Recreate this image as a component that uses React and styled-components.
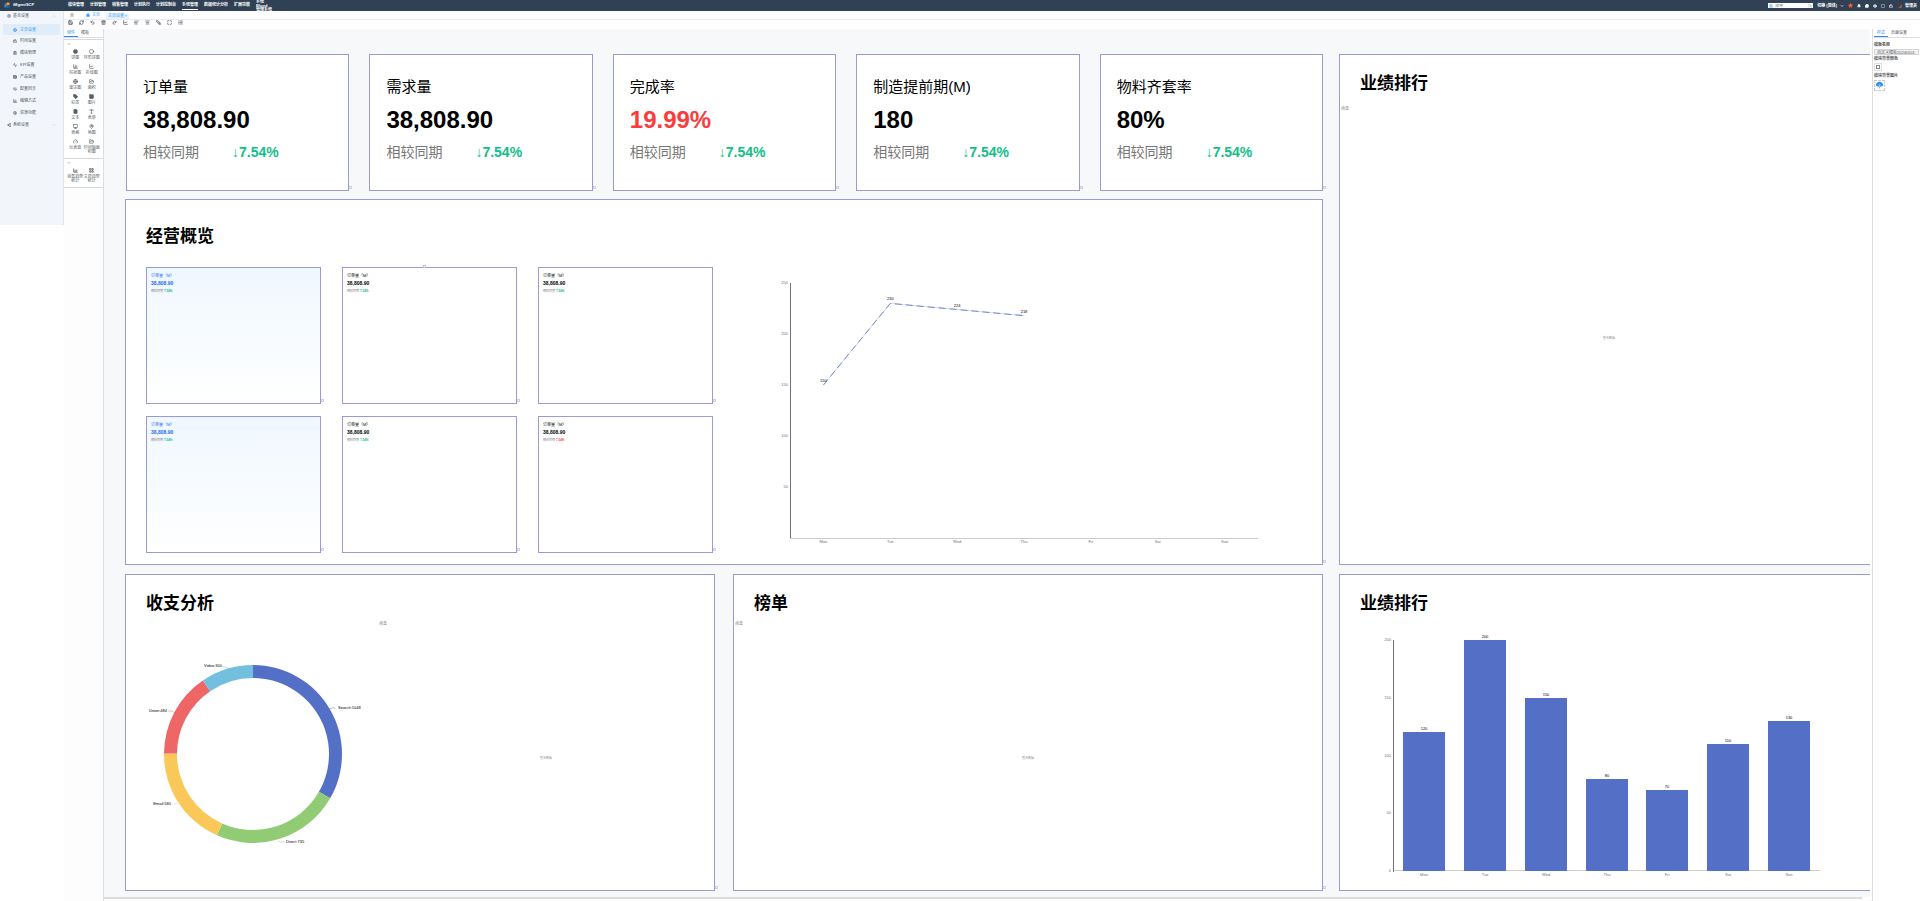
import React from "react";
import styled, { createGlobalStyle } from "styled-components";
import {
  Activity, AlignCenter, AlignLeft, ArrowLeftRight, Bell, ChartArea, ChartColumn, ChartLine, ChartPie,
  ChevronDown, ChevronUp, Circle, ClipboardList, CloudUpload, FileText, FolderOpen, Gauge,
  Globe, Hexagon, House, Image, LayoutGrid, List, Lock, MapPin, Maximize, Menu, MessageCircle, Monitor,
  Redo2, RefreshCw, Save, Search, Settings, Share2, SquareStack, Star, Table, Tag, Trash2, Type, Undo2,
} from "lucide-react";

const LINE = "#9a9ad6";

const GlobalStyle = createGlobalStyle`
  *, *::before, *::after { box-sizing: border-box; }
  body {
    margin: 0;
    background: #fff;
    color: #333;
    font-family: "Liberation Sans", "Noto Sans CJK SC", sans-serif;
    font-size: 4px;
    line-height: 6px;
  }
  button, input { font: inherit; color: inherit; margin: 0; padding: 0; border: 0; background: none; }
  h2, h3, p, ul { margin: 0; padding: 0; font-weight: normal; font-size: inherit; }
  ul { list-style: none; }
  a { color: inherit; text-decoration: none; }
  svg { display: block; flex: none; }
`;

const Page = styled.div`
  display: flex;
  flex-direction: column;
  min-height: 100vh;
  overflow: hidden;
`;

/* header */
const Header = styled.header`
  display: flex;
  height: 11px;
  padding: 0 3px 0 4px;
  background: #304156;
  color: #fff;
`;
const Brand = styled.a`
  display: flex;
  align-items: center;
  gap: 3px;
  width: 64px;
  height: 10px;
  font-size: 4px;
  font-weight: bold;
`;
const Nav = styled.nav`
  display: flex;
  flex: 1;
  gap: 6px;
  font-weight: bold;
  white-space: nowrap;
`;
const NavLink = styled.a`
  height: 10px;
  padding-top: 2px;
  border-bottom: 1px solid ${(p) => (p.$active ? "#fff" : "transparent")};
`;
const NavStack = styled.a`
  line-height: 4px;
`;
const HeaderTools = styled.div`
  display: flex;
  align-items: center;
  gap: 4px;
  height: 11px;
`;
const SearchBox = styled.label`
  display: flex;
  align-items: center;
  gap: 2px;
  width: 45px;
  height: 5px;
  padding: 0 1px;
  background: #fff;
  color: #8a9aac;
  line-height: 4px;

  input { flex: 1; min-width: 0; height: 4px; }
  svg:first-child { color: #409eff; }
`;
const Tool = styled.button`
  display: flex;
  align-items: center;
  gap: 3px;
  color: ${(p) => p.$color || "#fff"};
  font-weight: bold;
  white-space: nowrap;
`;
const Avatar = styled.span`
  width: 5px;
  height: 5px;
  border-radius: 2px;
  background: linear-gradient(135deg, #4b3a36 50%, #c88a68);
`;

/* sidebar */
const Body = styled.div`
  display: flex;
  flex: 1;
  align-items: stretch;
`;
const Sidebar = styled.aside`
  flex: 0 0 64px;
  align-self: flex-start;
  height: 214px;
  padding: 0 3px;
  border-right: 1px solid #dfe5ec;
  background: #f2f6fa;
`;
const Group = styled.button`
  display: flex;
  align-items: center;
  gap: 2px;
  width: 100%;
  height: 10px;
  padding: 0 4px;
  color: #555f6b;

  span { flex: 1; text-align: left; }
`;
const MenuList = styled.ul`
  padding: 3px 0 1px;
`;
const MenuLink = styled.a`
  display: flex;
  align-items: center;
  gap: 3px;
  height: ${(p) => (p.$active ? "11px" : "12px")};
  padding-left: 10px;
  border-radius: 2px;
  background: ${(p) => (p.$active ? "#e0edf9" : "transparent")};
  color: ${(p) => (p.$active ? "#409eff" : "#4a5562")};
`;

/* workspace */
const Work = styled.main`
  display: flex;
  flex: 1;
  flex-direction: column;
  min-width: 0;
`;
const TabsRow = styled.div`
  display: flex;
  align-items: flex-end;
  gap: 4px;
  height: 9px;
  padding-left: 4px;
  border-bottom: 1px solid #e8ebef;
`;
const PageTab = styled.button`
  display: flex;
  align-items: center;
  gap: 2px;
  height: 6px;
  margin-bottom: ${(p) => (p.$active ? 0 : "1px")};
  padding: 0 2px;
  margin-right: ${(p) => (p.$plain ? "4px" : 0)};
  border-radius: 2px 2px 0 0;
  background: ${(p) => (p.$active ? "#e6f2ff" : "transparent")};
  color: ${(p) => (p.$plain ? "#666" : "#409eff")};
`;
const Toolbar = styled.div`
  display: flex;
  gap: 6px;
  height: 9px;
  padding-left: 4px;
  color: #4a4f57;
`;
const ToolbarButton = styled.button`
  height: 5px;
`;
const Editor = styled.div`
  display: flex;
  flex: 1;
`;
const Palette = styled.section`
  flex: 0 0 40px;
  border-right: 1px solid #dcdee2;
  background: #fdfdfd;
`;
const SideTabs = styled.div`
  display: flex;
  height: 9px;
  border-bottom: 1px solid #dcdee2;
`;
const SideTab = styled.button`
  width: ${(p) => p.$width || "14px"};
  height: 8px;
  border-bottom: 1px solid ${(p) => (p.$active ? "#2d8cf0" : "transparent")};
  color: ${(p) => (p.$active ? "#2d8cf0" : "#555")};
  white-space: nowrap;
`;
const PaletteGroup = styled.div`
  padding: 2px 3px 4px;
  border-bottom: 1px solid #d6d8dc;
  border-top: ${(p) => (p.$first ? "1px solid #d6d8dc" : 0)};
  margin-top: ${(p) => (p.$first ? "1px" : 0)};
  background: #fff;
`;
const PaletteGrid = styled.div`
  display: grid;
  grid-template-columns: 1fr 1fr;
  grid-auto-rows: minmax(15px, auto);
  padding-top: 3px;
`;
const PaletteItem = styled.button`
  display: flex;
  flex-direction: column;
  align-items: center;
  justify-content: flex-start;
  gap: 2px;
  color: #5a5f66;
  line-height: 4px;
  white-space: pre-line;

  svg { fill: ${(p) => (p.$solid ? "currentColor" : "none")}; }
`;

/* board */
const CanvasArea = styled.section`
  display: flex;
  flex: 1;
  flex-direction: column;
  min-width: 0;
`;
const Canvas = styled.div`
  overflow: hidden;
  padding: 25px 0 6px 21px;
  background: #f6f8fa;
`;
const ScrollThumb = styled.div`
  height: 2px;
  margin-right: 8px;
  background: #dcdcdc;
`;
const Board = styled.div`
  display: grid;
  grid-template-columns: minmax(0, 1198fr) minmax(0, 540fr);
  gap: 9px 16px;
  margin-right: -9px;
  color: #000;
`;
const Stack = styled.div`
  display: flex;
  flex-direction: column;
  gap: 8px;
`;
const KpiRow = styled.div`
  display: flex;
  gap: 20px;
  padding-left: 1px;
`;
const PairRow = styled.div`
  display: grid;
  grid-template-columns: 1fr 1fr;
  gap: 18px;
`;
const Frame = styled.article`
  position: relative;
  border: 1px solid ${LINE};
  background: #fff;

  &::after {
    content: "";
    position: absolute;
    right: -4px;
    bottom: 1px;
    width: 3px;
    height: 3px;
    border: 1px solid #cfcfe2;
  }
`;
const KpiCard = styled(Frame)`
  display: flex;
  flex: 1;
  flex-direction: column;
  gap: 5px;
  height: 137px;
  padding: 21px 16px 0;
`;
const KpiName = styled.h3`
  && { font-size: 15px; }
  line-height: 22px;
`;
const KpiValue = styled.p`
  && { font-size: 24px; font-weight: bold; }
  line-height: 34px;
  color: ${(p) => p.$color || "#000"};
`;
const KpiDelta = styled.p`
  && { font-size: 14px; }
  display: flex;
  gap: 33px;
  line-height: 20px;
  color: #777;

  b { color: #10c088; }
`;
const Panel = styled(Frame)`
  display: flex;
  flex-direction: column;
  height: ${(p) => p.$height || "auto"};
  padding-top: ${(p) => p.$top || "17px"};
`;
const PanelTitle = styled.h2`
  && { font-size: 17px; font-weight: bold; }
  padding-left: 20px;
  line-height: 24px;
`;
const OverviewBody = styled.div`
  display: flex;
  padding: 18px 20px 0;
`;
const MiniGrid = styled.div`
  display: grid;
  flex: 0 0 567px;
  grid-template-columns: repeat(3, 1fr);
  gap: 12px 21px;
`;
const MiniCard = styled(Frame)`
  height: 137px;
  padding: 5px 4px;
  background: ${(p) => (p.$tint ? "linear-gradient(#eff7ff, #fff)" : "#fff")};
  color: ${(p) => (p.$tint ? "#2468f2" : "#000")};
`;
const MiniValue = styled.p`
  && { font-size: 5px; font-weight: bold; }
  line-height: 8px;
`;
const MiniDelta = styled.p`
  && { font-size: 3px; }
  display: flex;
  gap: 1px;
  line-height: 8px;
  color: #888;

  b { color: ${(p) => (p.$down ? "#f53f3f" : "#10b981")}; }
`;
const TopHandle = styled.i`
  position: absolute;
  top: -3px;
  left: 80px;
  width: 3px;
  height: 3px;
  border: 1px solid #c2c2cc;
`;
const Split = styled.div`
  display: flex;
  flex: 1;
  padding-left: 20px;
`;
const DonutBox = styled.div`
  flex: 0 0 232px;
`;
const ListBox = styled.div`
  display: flex;
  flex: 1;
  flex-direction: column;
  padding-top: ${(p) => p.$top || 0};
`;
const ListHead = styled.p`
  padding: 5px 1px 0;
  line-height: 5px;
  color: #555;
`;
const Empty = styled.p`
  display: flex;
  flex: 1;
  align-items: center;
  justify-content: center;
  && { font-size: 3px; }
  color: #909399;
`;
const ChartBox = styled.div`
  padding-left: 21px;
`;

/* property panel */
const Props = styled.aside`
  flex: 0 0 48px;
  margin-left: 2px;
  padding-left: 1px;
  border-left: 1px solid #dcdee2;
`;
const Field = styled.label`
  display: block;
  padding-top: ${(p) => p.$top || "1px"};
  font-weight: bold;
  color: #555;
  white-space: nowrap;
`;
const TextInput = styled.input`
  display: block;
  width: 45px;
  height: 6px;
  margin-top: 1px;
  padding: 0 2px;
  border: 1px solid #d4d6da;
  background: #f2f2f2;
  font-weight: normal;
  line-height: 4px;
`;
const Swatch = styled.button`
  display: grid;
  place-items: center;
  width: 8px;
  height: 8px;
  margin-top: 1px;
  border: 1px solid #dcdee2;

  i { width: 4px; height: 4px; border: 1px solid #888; }
`;
const Upload = styled.button`
  display: grid;
  place-items: start center;
  width: 11px;
  height: 11px;
  margin-top: 1px;
  border: 1px dashed #c8ccd2;
`;

const NAV = ["模块管理", "计划管理", "销售管理", "计划执行", "计划控制台", "系统管理", "数据统计分析", "扩展功能"];
const MENU = [
  ["主页设置", Globe], ["时间设置", Lock], ["模块管理", ClipboardList], ["KPI设置", Activity],
  ["产品设置", Table], ["配置同步", ArrowLeftRight], ["编辑方式", ChartColumn], ["资源功能", Settings],
];
const TOOLBAR = [Save, RefreshCw, Undo2, Trash2, Redo2, ChartLine, AlignLeft, AlignCenter, SquareStack, Maximize, List];
const PALETTE = [
  ["饼图", ChartPie, true], ["环形饼图", Circle], ["柱状图", ChartColumn], ["折线图", ChartLine], ["雷达图", Globe],
  ["面积", FolderOpen], ["标签", Tag, true], ["图片", Image, true], ["文本", FileText, true], ["表单", Type],
  ["表格", Monitor], ["地图", MapPin], ["仪表盘", Gauge], ["时间轴面\n积图", FolderOpen],
];
const PALETTE_MORE = [["销售趋势\n统计", ChartArea], ["交易趋势\n统计", LayoutGrid]];
const KPIS = [
  ["订单量", "38,808.90"], ["需求量", "38,808.90"], ["完成率", "19.99%", "#fa3c3c"], ["制造提前期(M)", "180"], ["物料齐套率", "80%"],
];
const DAYS = ["Mon", "Tue", "Wed", "Thu", "Fri", "Sat", "Sun"];

function Logo() {
  return (
    <svg width="6" height="6" viewBox="0 0 12 12">
      <path d="M1 3h4v8H1z" fill="#2c8bd8" />
      <path d="M5 1h6v5H8L5 8z" fill="#f2992e" />
      <path d="M6 8l5-1v4H6z" fill="#1b6fb8" />
    </svg>
  );
}

function CloudIcon() {
  return (
    <svg width="9" height="8" viewBox="0 0 18 16">
      <path d="M4 11a4 4 0 0 1 0-7 6 6 0 0 1 10 0 4 4 0 0 1 0 7z" fill="#2d8cf0" />
      <path d="M9 15V7M6 9l3-3 3 3" fill="none" stroke="#8cc2fa" strokeWidth="2" />
    </svg>
  );
}

function LineChart() {
  const left = 77, top = 16, bottom = 271, width = 468;
  const band = width / 7;
  const values = [150, 230, 224, 218];
  const pts = values.map((v, i) => [left + band * (i + 0.5), bottom - (v / 250) * (bottom - top)]);
  const line = pts.map((p) => p.join(",")).join(" ");
  return (
    <svg width="589" height="286" viewBox="0 0 589 286" fontSize="4" textAnchor="middle">
      <path d={`M${left + 0.5} ${top}V${bottom + 1}`} stroke="#6e7079" />
      <path d={`M${left} ${bottom + 0.5}H${left + width}`} stroke="#ccc" />
      {DAYS.map((d, i) => (
        <text key={d} x={left + band * (i + 0.5)} y={bottom + 5} fill="#6e7079">{d}</text>
      ))}
      {[50, 100, 150, 200, 250].map((v) => (
        <text key={v} x={left - 2} y={bottom - (v / 250) * (bottom - top) + 1} fill="#6e7079" textAnchor="end">{v}</text>
      ))}
      <polyline points={line} fill="none" stroke="#5470c6" strokeOpacity="0.35" strokeWidth="0.8" />
      <polyline points={line} fill="none" stroke="#5470c6" strokeDasharray="7 4" strokeWidth="0.8" />
      {pts.map(([x, y], i) => (
        <text key={i} x={x} y={y - 3} fill="#000">{values[i]}</text>
      ))}
    </svg>
  );
}

function BarChart() {
  const left = 33, top = 24, bottom = 255, width = 426;
  const band = width / 7;
  const y = (v) => Math.round(bottom - (v / 200) * (bottom - top));
  return (
    <svg width="480" height="274" viewBox="0 0 480 274" fontSize="4" textAnchor="middle">
      <path d={`M${left - 0.5} ${top}V${bottom + 1}`} stroke="#6e7079" />
      <path d={`M${left} ${bottom - 0.5}H${left + width}`} stroke="#ccc" />
      {[0, 50, 100, 150, 200].map((v) => (
        <text key={v} x={left - 3} y={y(v) + 1} fill="#6e7079" textAnchor="end">{v}</text>
      ))}
      {[120, 200, 150, 80, 70, 110, 130].map((v, i) => {
        const x = Math.round(left + band * i + 9);
        return (
          <g key={i}>
            <rect x={x} y={y(v)} width="42" height={bottom - y(v)} fill="#5470c6" />
            <text x={x + 21} y={y(v) - 2} fill="#000">{v}</text>
            <text x={x + 21} y={bottom + 5} fill="#6e7079">{DAYS[i]}</text>
          </g>
        );
      })}
    </svg>
  );
}

const SHARES = [
  ["Search:1048", 1048, "#5470c6", 192, 93, "start", "M183 93l3 -1h3"],
  ["Direct:735", 735, "#91cc75", 140, 227, "start", "M132 225l2 1h5"],
  ["Email:580", 580, "#fac858", 25, 189, "end", "M32 187l-2 1h-4"],
  ["Union:484", 484, "#ee6666", 21, 96, "end", "M29 97l-3 -2h-4"],
  ["Video:300", 300, "#73c0de", 76, 51, "end", "M83 54l-2 -3h-4"],
];

function Donut() {
  const cx = 107, cy = 138, R = 89, r = 76;
  const total = SHARES.reduce((s, d) => s + d[1], 0);
  const at = (rad, a) => `${cx + rad * Math.sin(a)} ${cy - rad * Math.cos(a)}`;
  let a0 = 0;
  return (
    <svg width="232" height="274" viewBox="0 0 232 274" fontSize="4">
      {SHARES.map(([name, v, color, x, y, anchor, lead]) => {
        const a1 = a0 + (v / total) * Math.PI * 2;
        const d = `M${at(R, a0)}A${R} ${R} 0 0 1 ${at(R, a1)}L${at(r, a1)}A${r} ${r} 0 0 0 ${at(r, a0)}Z`;
        a0 = a1;
        return (
          <g key={name}>
            <path d={d} fill={color} />
            <path d={lead} fill="none" stroke={color} strokeWidth="0.5" />
            <text x={x} y={y} textAnchor={anchor} fill="#000">{name}</text>
          </g>
        );
      })}
    </svg>
  );
}

function PaletteItems({ items }) {
  return (
    <PaletteGrid>
      {items.map(([name, Icon, solid]) => (
        <PaletteItem key={name} $solid={solid}><Icon size={5} strokeWidth={3} /><span>{name}</span></PaletteItem>
      ))}
    </PaletteGrid>
  );
}

export default function App() {
  return (
    <Page>
      <GlobalStyle />
      <Header>
        <Brand href="#"><Logo />iMgentSCP</Brand>
        <Nav>
          {NAV.map((n) => <NavLink key={n} href="#" $active={n === "系统管理"}>{n}</NavLink>)}
          <NavStack href="#">系统<br />Blood<br />管理系统</NavStack>
        </Nav>
        <HeaderTools>
          <SearchBox>
            <Menu size={4} strokeWidth={4} />
            <input type="text" placeholder="搜索" aria-label="搜索" />
            <Search size={4} />
          </SearchBox>
          <Tool>切换 (简体) <ChevronDown size={4} strokeWidth={4} /></Tool>
          <Tool $color="#ff6a2b" aria-label="收藏"><Star size={5} fill="currentColor" /></Tool>
          <Tool aria-label="通知"><Bell size={4} fill="currentColor" /></Tool>
          <Tool aria-label="消息"><MessageCircle size={4} fill="currentColor" /></Tool>
          <Tool aria-label="设置"><Hexagon size={4} fill="#ccc" /></Tool>
          <Tool aria-label="全屏"><Maximize size={4} strokeWidth={3} /></Tool>
          <Tool aria-label="锁定"><Lock size={4} strokeWidth={3} /></Tool>
          <Tool><Avatar />管理员</Tool>
        </HeaderTools>
      </Header>

      <Body>
        <Sidebar>
          <Group><Settings size={4} strokeWidth={3} /><span>基本设置</span><ChevronUp size={4} color="#aab2bb" /></Group>
          <MenuList>
            {MENU.map(([name, Icon], i) => (
              <li key={name}>
                <MenuLink href="#" $active={i === 0}><Icon size={4} strokeWidth={3} />{name}</MenuLink>
              </li>
            ))}
          </MenuList>
          <Group><Share2 size={4} strokeWidth={3} /><span>系统设置</span><ChevronDown size={4} color="#aab2bb" /></Group>
        </Sidebar>

        <Work>
          <TabsRow>
            <PageTab $plain aria-label="菜单"><Menu size={4} strokeWidth={3} /></PageTab>
            <PageTab><House size={4} fill="currentColor" />主页</PageTab>
            <PageTab $active>主页设置 ×</PageTab>
          </TabsRow>
          <Toolbar>
            {TOOLBAR.map((Icon, i) => (
              <ToolbarButton key={i} aria-label={`工具 ${i + 1}`}><Icon size={5} strokeWidth={3} /></ToolbarButton>
            ))}
          </Toolbar>
          <Editor>
            <Palette>
              <SideTabs>
                <SideTab $active>组件</SideTab>
                <SideTab>模板</SideTab>
              </SideTabs>
              <PaletteGroup $first>
                <ChevronDown size={4} />
                <PaletteItems items={PALETTE} />
              </PaletteGroup>
              <PaletteGroup>
                <ChevronDown size={4} />
                <PaletteItems items={PALETTE_MORE} />
              </PaletteGroup>
            </Palette>

            <CanvasArea>
              <Canvas>
                <Board>
                  <Stack>
                    <KpiRow>
                      {KPIS.map(([name, value, color]) => (
                        <KpiCard key={name}>
                          <KpiName>{name}</KpiName>
                          <KpiValue $color={color}>{value}</KpiValue>
                          <KpiDelta>相较同期<b>↓7.54%</b></KpiDelta>
                        </KpiCard>
                      ))}
                    </KpiRow>
                    <Panel $height="366px" $top="25px">
                      <PanelTitle>经营概览</PanelTitle>
                      <OverviewBody>
                        <MiniGrid>
                          {[0, 1, 2, 3, 4, 5].map((i) => (
                            <MiniCard key={i} $tint={i % 3 === 0}>
                              {i === 1 && <TopHandle />}
                              <h3>订单量（M）</h3>
                              <MiniValue>38,808.90</MiniValue>
                              <MiniDelta $down={i === 5}>相较同期<b>7.54%</b></MiniDelta>
                            </MiniCard>
                          ))}
                        </MiniGrid>
                        <LineChart />
                      </OverviewBody>
                    </Panel>
                  </Stack>
                  <Panel>
                    <PanelTitle>业绩排行</PanelTitle>
                    <ListBox $top="5px">
                      <ListHead>点击</ListHead>
                      <Empty>暂无数据</Empty>
                    </ListBox>
                  </Panel>
                  <PairRow>
                    <Panel $height="317px">
                      <PanelTitle>收支分析</PanelTitle>
                      <Split>
                        <DonutBox><Donut /></DonutBox>
                        <ListBox>
                          <ListHead>点击</ListHead>
                          <Empty>暂无数据</Empty>
                        </ListBox>
                      </Split>
                    </Panel>
                    <Panel $height="317px">
                      <PanelTitle>榜单</PanelTitle>
                      <ListBox>
                        <ListHead>点击</ListHead>
                        <Empty>暂无数据</Empty>
                      </ListBox>
                    </Panel>
                  </PairRow>
                  <Panel $height="317px">
                    <PanelTitle>业绩排行</PanelTitle>
                    <ChartBox><BarChart /></ChartBox>
                  </Panel>
                </Board>
              </Canvas>
              <ScrollThumb />
            </CanvasArea>

            <Props>
              <SideTabs>
                <SideTab $active>样式</SideTab>
                <SideTab $width="22px">页面设置</SideTab>
              </SideTabs>
              <Field $top="4px">
                模板名称
                <TextInput type="text" defaultValue="自定义模板20240101" />
              </Field>
              <Field as="p">模块背景颜色</Field>
              <Swatch aria-label="模块背景颜色"><i /></Swatch>
              <Field as="p" $top="2px">模块背景图片</Field>
              <Upload aria-label="模块背景图片"><CloudIcon /></Upload>
            </Props>
          </Editor>
        </Work>
      </Body>
    </Page>
  );
}
